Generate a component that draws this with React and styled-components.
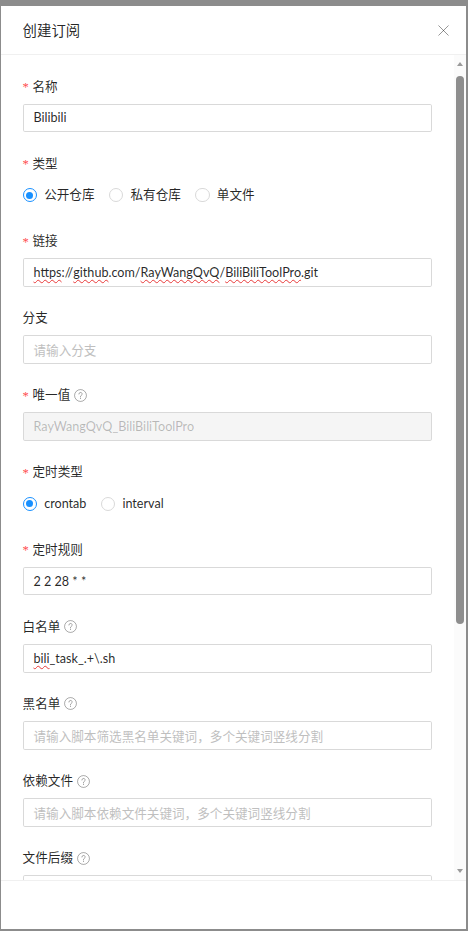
import React from "react";
import styled, { createGlobalStyle, css } from "styled-components";

const Global = createGlobalStyle`
  html, body { margin: 0; padding: 0; }
  body {
    background: #8c8c8c;
    font-family: "Lato", "Noto Sans CJK SC", sans-serif;
    -webkit-font-smoothing: antialiased;
  }
`;

const Page = styled.div`
  width: 468px;
  height: 931px;
  padding: 6px 2px 2px 1px;
  box-sizing: border-box;
  display: flex;
`;

const Modal = styled.div`
  flex: 1;
  background: #fff;
  display: flex;
  flex-direction: column;
  overflow: hidden;
`;

const Header = styled.div`
  height: 49px;
  box-sizing: border-box;
  border-bottom: 1px solid #f0f0f0;
  display: flex;
  align-items: center;
  justify-content: space-between;
  padding: 0 0 0 21.6px;
`;

const Title = styled.div`
  font-family: "Noto Sans CJK SC", sans-serif;
  font-size: 14.4px;
  line-height: 20px;
  color: rgba(0, 0, 0, 0.85);
  font-weight: 400;
`;

const Close = styled.button`
  width: 46px;
  height: 48px;
  border: 0;
  background: transparent;
  display: flex;
  align-items: center;
  justify-content: center;
  padding: 0;
  color: rgba(0, 0, 0, 0.45);
`;

const Body = styled.div`
  flex: 1;
  display: flex;
  min-height: 0;
`;

const Content = styled.div`
  flex: 1;
  overflow: hidden;
  padding: 21.6px 21.6px 0 21.6px;
  min-width: 0;
`;

const ScrollBar = styled.div`
  width: 12px;
  background: #fbfbfb;
  display: flex;
  flex-direction: column;
  align-items: center;
`;

const Arrow = styled.div`
  height: 18px;
  width: 100%;
  display: flex;
  align-items: center;
  justify-content: center;
  &::before {
    content: "";
    width: 0;
    height: 0;
    border-left: 3.5px solid transparent;
    border-right: 3.5px solid transparent;
    ${(p) =>
      p.$down
        ? css`border-top: 4px solid #9a9a9a;`
        : css`border-bottom: 4px solid #9a9a9a;`}
  }
`;

const Thumb = styled.div`
  width: 8px;
  height: 548px;
  margin-top: 3px;
  border-radius: 4px;
  background: #8e8e8e;
`;

const Spacer = styled.div`
  flex: 1;
`;

const Footer = styled.div`
  height: 49px;
  border-top: 1px solid #f0f0f0;
  box-sizing: border-box;
  background: #fff;
`;

const Item = styled.div`
  margin-bottom: 21.4px;
`;

const Label = styled.div`
  height: 19.8px;
  line-height: 19.8px;
  padding-bottom: 7.2px;
  display: flex;
  align-items: center;
  font-size: 12.6px;
  color: rgba(0, 0, 0, 0.85);
`;

const Star = styled.span`
  color: #ff4d4f;
  font-family: "Liberation Serif", serif;
  font-size: 12.6px;
  margin-right: 3.6px;
  line-height: 1;
  position: relative;
  top: 1px;
`;

const Help = styled.span`
  display: inline-flex;
  margin-left: 3.6px;
  color: rgba(0, 0, 0, 0.45);
`;

const Field = styled.div`
  height: 28.8px;
  box-sizing: border-box;
  border: 1px solid #d9d9d9;
  border-radius: 1.8px;
  padding: 0 9.9px;
  display: flex;
  align-items: center;
  font-size: 12.6px;
  white-space: pre;
  overflow: hidden;
  color: rgba(0, 0, 0, 0.85);
  background: #fff;
  ${(p) =>
    p.$placeholder &&
    css`
      color: #bfbfbf;
    `}
  ${(p) =>
    p.$disabled &&
    css`
      background: #f5f5f5;
      color: rgba(0, 0, 0, 0.25);
    `}
`;

const Typo = styled.span`
  text-decoration: underline wavy #e83a3a;
  text-decoration-thickness: 1px;
  text-underline-offset: 2px;
  text-decoration-skip-ink: none;
`;

const RadioGroup = styled.div`
  height: 28.8px;
  display: flex;
  align-items: center;
`;

const RadioOption = styled.label`
  display: flex;
  align-items: center;
  margin-right: 7.2px;
  font-size: 12.6px;
  color: rgba(0, 0, 0, 0.85);
`;

const RadioCircle = styled.span`
  width: 14.4px;
  height: 14.4px;
  box-sizing: border-box;
  border-radius: 50%;
  border: 1px solid ${(p) => (p.$checked ? "#1890ff" : "#d9d9d9")};
  display: flex;
  align-items: center;
  justify-content: center;
  background: #fff;
  &::after {
    content: "";
    width: 7.2px;
    height: 7.2px;
    border-radius: 50%;
    background: #1890ff;
    display: ${(p) => (p.$checked ? "block" : "none")};
  }
`;

const RadioText = styled.span`
  padding: 0 7.2px;
  line-height: 19.8px;
`;

const HelpIcon = () => (
  <svg width="13" height="13" viewBox="0 0 16 16" fill="none" stroke="currentColor">
    <circle cx="8" cy="8" r="7.3" strokeWidth="0.9" />
    <path d="M6 6.2a2 2 0 1 1 2.9 1.8c-.6.3-.9.7-.9 1.3v.6" strokeWidth="0.9" strokeLinecap="round" />
    <circle cx="8" cy="11.7" r="0.65" fill="currentColor" stroke="none" />
  </svg>
);

const CloseIcon = () => (
  <svg width="11" height="11" viewBox="0 0 12 12" stroke="currentColor" strokeWidth="1">
    <path d="M0.5 0.5L11.5 11.5M11.5 0.5L0.5 11.5" />
  </svg>
);

const FormLabel = ({ required, help, children }) => (
  <Label>
    {required && <Star>*</Star>}
    {children}
    {help && (
      <Help>
        <HelpIcon />
      </Help>
    )}
  </Label>
);

const Radios = ({ options, value }) => (
  <RadioGroup>
    {options.map((o) => (
      <RadioOption key={o}>
        <RadioCircle $checked={o === value} />
        <RadioText>{o}</RadioText>
      </RadioOption>
    ))}
  </RadioGroup>
);

export default function App() {
  return (
    <Page>
      <Global />
      <Modal>
        <Header>
          <Title>创建订阅</Title>
          <Close aria-label="close">
            <CloseIcon />
          </Close>
        </Header>
        <Body>
          <Content>
            <Item>
              <FormLabel required>名称</FormLabel>
              <Field>Bilibili</Field>
            </Item>
            <Item>
              <FormLabel required>类型</FormLabel>
              <Radios options={["公开仓库", "私有仓库", "单文件"]} value="公开仓库" />
            </Item>
            <Item>
              <FormLabel required>链接</FormLabel>
              <Field>
                <Typo>https</Typo>://<Typo>github</Typo>.com/<Typo>RayWangQvQ</Typo>/<Typo>BiliBiliToolPro</Typo>.git
              </Field>
            </Item>
            <Item>
              <FormLabel>分支</FormLabel>
              <Field $placeholder>请输入分支</Field>
            </Item>
            <Item>
              <FormLabel required help>唯一值</FormLabel>
              <Field $disabled>RayWangQvQ_BiliBiliToolPro</Field>
            </Item>
            <Item>
              <FormLabel required>定时类型</FormLabel>
              <Radios options={["crontab", "interval"]} value="crontab" />
            </Item>
            <Item>
              <FormLabel required>定时规则</FormLabel>
              <Field>2 2 28 * *</Field>
            </Item>
            <Item>
              <FormLabel help>白名单</FormLabel>
              <Field>
                <Typo>bili</Typo>_task_.+\.sh
              </Field>
            </Item>
            <Item>
              <FormLabel help>黑名单</FormLabel>
              <Field $placeholder>请输入脚本筛选黑名单关键词，多个关键词竖线分割</Field>
            </Item>
            <Item>
              <FormLabel help>依赖文件</FormLabel>
              <Field $placeholder>请输入脚本依赖文件关键词，多个关键词竖线分割</Field>
            </Item>
            <Item>
              <FormLabel help>文件后缀</FormLabel>
              <Field $placeholder></Field>
            </Item>
          </Content>
          <ScrollBar>
            <Arrow />
            <Thumb />
            <Spacer />
            <Arrow $down />
          </ScrollBar>
        </Body>
        <Footer />
      </Modal>
    </Page>
  );
}
